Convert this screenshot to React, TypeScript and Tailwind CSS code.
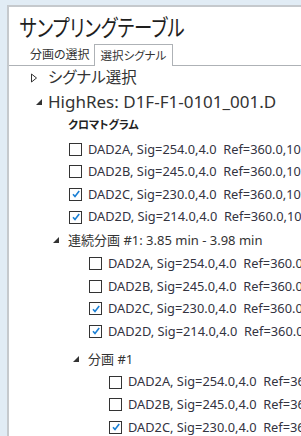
const font = "font-['Noto_Sans','Noto_Sans_CJK_JP',sans-serif]";

type Row = { label: string; checked: boolean };

const rowsA: Row[] = [
  { label: "DAD2A, Sig=254.0,4.0  Ref=360.0,100.0", checked: false },
  { label: "DAD2B, Sig=245.0,4.0  Ref=360.0,100.0", checked: false },
  { label: "DAD2C, Sig=230.0,4.0  Ref=360.0,100.0", checked: true },
  { label: "DAD2D, Sig=214.0,4.0  Ref=360.0,100.0", checked: true },
];

function Check({ checked }: { checked: boolean }) {
  return (
    <span className="w-[13px] h-[13px] border border-[#333] bg-white flex items-center justify-center shrink-0">
      {checked && (
        <svg width="10" height="10" viewBox="0 0 10 10">
          <path d="M2 5.2 L4 7.5 L8.2 2" fill="none" stroke="#1a7fd4" strokeWidth="1.6" />
        </svg>
      )}
    </span>
  );
}

function CheckRow({ row, indent }: { row: Row; indent: string }) {
  return (
    <div className={`h-[22.6px] flex items-center gap-[6px] ${indent}`}>
      <Check checked={row.checked} />
      <span className="text-[12.8px] text-[#33333f] whitespace-pre">{row.label}</span>
    </div>
  );
}

function Caret({ open }: { open: boolean }) {
  return open ? (
    <svg width="8" height="8" viewBox="0 0 8 8" className="shrink-0">
      <path d="M7 1 L7 7 L1 7 Z" fill="#333" />
    </svg>
  ) : (
    <svg width="8" height="10" viewBox="0 0 8 10" className="shrink-0">
      <path d="M1.5 1 L6.5 5 L1.5 9 Z" fill="none" stroke="#333" strokeWidth="1" />
    </svg>
  );
}

export default function App() {
  return (
    <div className={`w-[301px] h-[436px] bg-[#e1ecf5] pl-[7px] pt-[5px] overflow-hidden ${font} [font-feature-settings:'palt']`}>
      <div className="h-full bg-white border-l-2 border-t-2 border-[#c5c9cd] overflow-hidden">
        {/* Title */}
        <div className="pl-[13px] pt-[4px] h-[37px] text-[23px] leading-[32px] text-[#1e1e1e] origin-left scale-x-[0.8] whitespace-nowrap">
          サンプリングテーブル
        </div>

        {/* Tabs */}
        <div className="flex items-end h-[22px] border-b border-[#aeb2b6]">
          <div className="pl-[21px] pr-[4px] text-[12px] leading-[20px] text-[#333]">分画の選択</div>
          <div className="h-[22px] px-[6px] -mb-px bg-white border border-b-0 border-[#aeb2b6] text-[11.5px] leading-[21px] text-[#333]">
            選択シグナル
          </div>
        </div>

        {/* Tree */}
        <div>
          <div className="h-[24px] flex items-center pl-[21px] gap-[10px]">
            <Caret open={false} />
            <span className="text-[15.5px] text-[#333]">シグナル選択</span>
          </div>
          <div className="h-[24px] flex items-center pl-[26px] gap-[5px]">
            <Caret open />
            <span className="text-[17px] text-[#333] whitespace-pre">HighRes: D1F-F1-0101_001.D</span>
          </div>
          <div className="h-[22px] flex items-center pl-[59px]">
            <span className="text-[11px] font-bold text-[#222]">クロマトグラム</span>
          </div>
          <div className="pt-[2px]">
            {rowsA.map((r) => (
              <CheckRow key={r.label} row={r} indent="pl-[60px]" />
            ))}
          </div>

          <div className="h-[24px] flex items-center pl-[43px] gap-[8px]">
            <Caret open />
            <span className="text-[13px] text-[#333] whitespace-pre">連続分画 #1: 3.85 min - 3.98 min</span>
          </div>
          {rowsA.map((r) => (
            <CheckRow key={"b" + r.label} row={r} indent="pl-[80px]" />
          ))}

          <div className="h-[28px] pt-[5px] flex items-center pl-[63px] gap-[8px]">
            <Caret open />
            <span className="text-[13px] text-[#333] whitespace-pre">分画 #1</span>
          </div>
          {rowsA.slice(0, 3).map((r) => (
            <CheckRow key={"c" + r.label} row={r} indent="pl-[100px]" />
          ))}
        </div>
      </div>
    </div>
  );
}
